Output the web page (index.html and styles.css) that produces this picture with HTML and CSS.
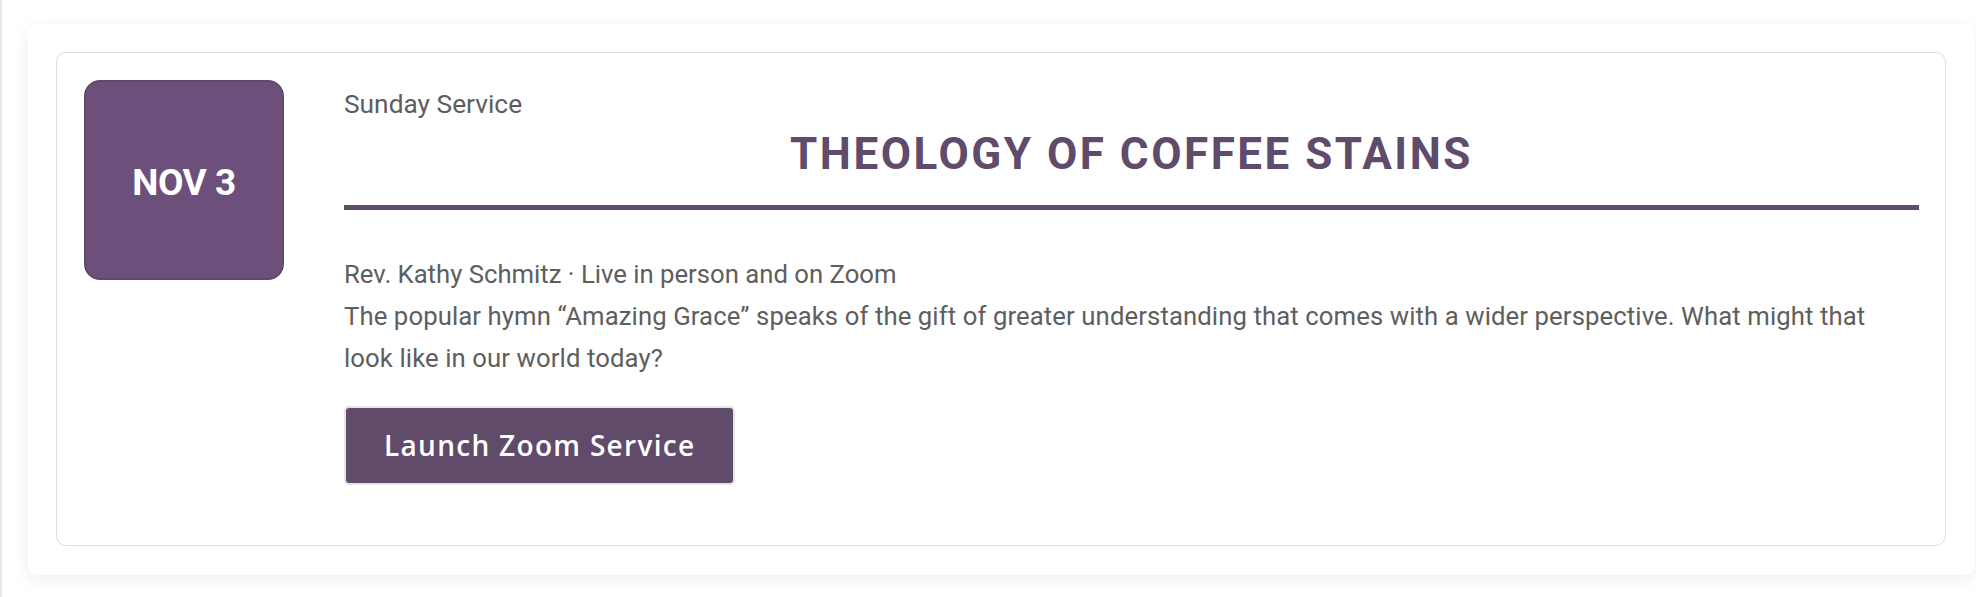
FILE: index.html
```html
<!DOCTYPE html>
<html lang="en">
<head>
<meta charset="utf-8">
<title>Sunday Service</title>
<link rel="stylesheet" href="styles.css">
</head>
<body>
<div class="page">
  <section class="panel">
    <article class="event">
      <div class="date-box"><span class="date-text">NOV 3</span></div>
      <div class="event-body">
        <div class="kicker">Sunday Service</div>
        <h2 class="title">THEOLOGY OF COFFEE STAINS</h2>
        <div class="rule"></div>
        <p class="meta">Rev. Kathy Schmitz · Live in person and on Zoom</p>
        <p class="desc">The popular hymn “Amazing Grace” speaks of the gift of greater understanding that comes with a wider perspective. What might that look like in our world today?</p>
        <a class="btn" href="#">Launch Zoom Service</a>
      </div>
    </article>
  </section>
</div>
</body>
</html>
```

FILE: styles.css
```css
html, body {
  margin: 0;
  padding: 0;
  background: #ffffff;
}
body {
  font-family: Roboto, "Liberation Sans", sans-serif;
  color: #5e5e5e;
}
.page {
  border-left: 2px solid #e6e6e6;
  padding: 24px 1px 24px 26px;
  min-height: 597px;
  box-sizing: border-box;
}
.panel {
  background: #fff;
  border-radius: 10px;
  box-shadow: 0 4px 18px rgba(0,0,0,0.07);
  padding: 28px 29px 29px 28px;
}
.event {
  display: flex;
  gap: 60px;
  border: 1px solid #dcdcdc;
  border-radius: 10px;
  padding: 27px 26px 60px 27px;
}
.date-box {
  flex: 0 0 auto;
  width: 196px;
  height: 196px;
  background: #6d4f7b;
  border: 2px solid #5f4a6c;
  border-radius: 16px;
  display: flex;
  align-items: center;
  justify-content: center;
}
.date-text {
  color: #fff;
  font-weight: 700;
  font-size: 37px;
  letter-spacing: -0.5px;
  padding-top: 4px;
}
.event-body {
  flex: 1 1 auto;
  min-width: 0;
}
.kicker {
  margin-top: 4px;
  font-size: 26.3px;
  line-height: 40px;
  color: #5e5e5e;
}
.title {
  margin: 5px 0 0;
  text-align: center;
  font-size: 44px;
  line-height: 50px;
  font-weight: 700;
  letter-spacing: 2.5px;
  color: #5f4b6b;
}
.rule {
  height: 5px;
  background: #5f4b6b;
  margin-top: 26px;
}
.meta {
  margin: 43px 0 0;
  font-size: 25.7px;
  line-height: 42px;
}
.desc {
  margin: 0;
  padding-right: 30px;
  font-size: 25.7px;
  line-height: 42px;
  letter-spacing: 0.1px;
}
.btn {
  display: inline-block;
  margin-top: 27px;
  border: 2px solid #e4e4e4;
  border-radius: 5px;
  background: #604c6a;
  color: #fff;
  text-decoration: none;
  font-family: "Open Sans", sans-serif;
  font-weight: 600;
  font-size: 28px;
  letter-spacing: 1.3px;
  line-height: 75px;
  padding: 0 38px;
}
```
